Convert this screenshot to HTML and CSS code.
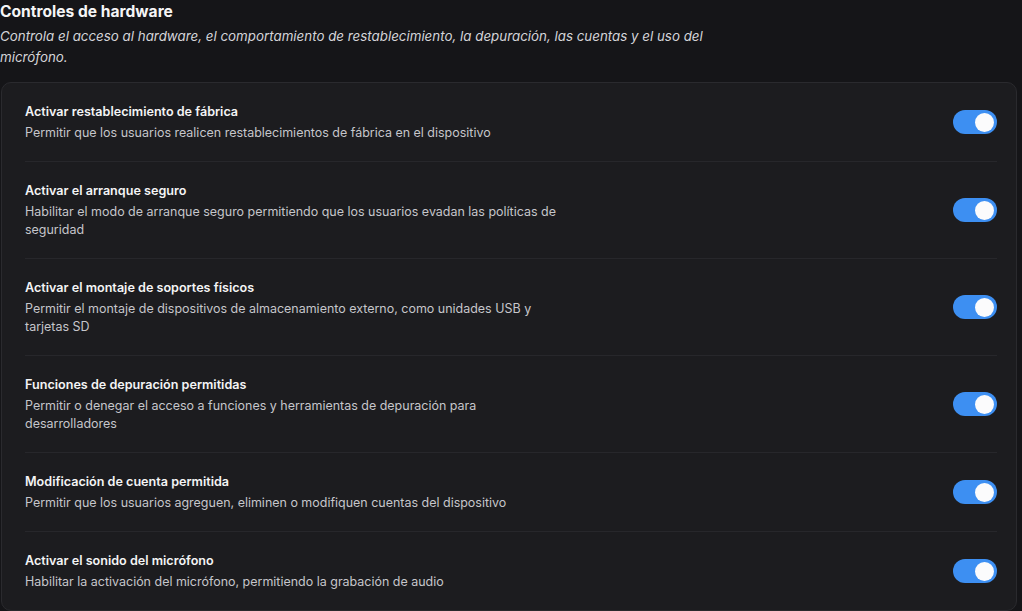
FILE: index.html
```html
<!DOCTYPE html>
<html lang="es">
<head>
<meta charset="utf-8">
<title>Controles de hardware</title>
<link rel="stylesheet" href="styles.css">
</head>
<body>
<main class="page">
  <header class="head">
    <h1 class="title">Controles de hardware</h1>
    <p class="subtitle">Controla el acceso al hardware, el comportamiento de restablecimiento, la depuración, las cuentas y el uso del micrófono.</p>
  </header>
  <section class="card">
    <div class="row">
      <div class="text">
        <div class="label">Activar restablecimiento de fábrica</div>
        <div class="desc">Permitir que los usuarios realicen restablecimientos de fábrica en el dispositivo</div>
      </div>
      <span class="switch"><span class="knob"></span></span>
    </div>
    <div class="row">
      <div class="text">
        <div class="label">Activar el arranque seguro</div>
        <div class="desc">Habilitar el modo de arranque seguro permitiendo que los usuarios evadan las políticas de seguridad</div>
      </div>
      <span class="switch"><span class="knob"></span></span>
    </div>
    <div class="row">
      <div class="text">
        <div class="label">Activar el montaje de soportes físicos</div>
        <div class="desc">Permitir el montaje de dispositivos de almacenamiento externo, como unidades USB y tarjetas SD</div>
      </div>
      <span class="switch"><span class="knob"></span></span>
    </div>
    <div class="row">
      <div class="text">
        <div class="label">Funciones de depuración permitidas</div>
        <div class="desc">Permitir o denegar el acceso a funciones y herramientas de depuración para desarrolladores</div>
      </div>
      <span class="switch"><span class="knob"></span></span>
    </div>
    <div class="row">
      <div class="text">
        <div class="label">Modificación de cuenta permitida</div>
        <div class="desc">Permitir que los usuarios agreguen, eliminen o modifiquen cuentas del dispositivo</div>
      </div>
      <span class="switch"><span class="knob"></span></span>
    </div>
    <div class="row">
      <div class="text">
        <div class="label">Activar el sonido del micrófono</div>
        <div class="desc">Habilitar la activación del micrófono, permitiendo la grabación de audio</div>
      </div>
      <span class="switch"><span class="knob"></span></span>
    </div>
  </section>
</main>
</body>
</html>
```
FILE: styles.css
```css
* { box-sizing: border-box; }
html, body {
  margin: 0;
  padding: 0;
  background: #151518;
  height: 100%;
  overflow: hidden;
}
body {
  font-family: Inter, "Noto Sans", "Liberation Sans", sans-serif;
  color: #f2f2f3;
}
.page {
  width: 1022px;
}
.title {
  margin: 0;
  font-size: 15.6px;
  font-weight: 700;
  line-height: 23px;
  color: #f5f5f6;
}
.subtitle {
  margin: 3px 0 0;
  max-width: 740px;
  font-size: 13.35px;
  font-style: italic;
  line-height: 21px;
  color: #d4d4d8;
}
.card {
  margin: 14px 0 0 1px;
  width: 1016px;
  background: #1c1c1f;
  border: 1px solid #2a2a2e;
  border-radius: 10px;
  padding: 0 19px 0 23px;
}
.row {
  display: flex;
  align-items: center;
  justify-content: space-between;
  padding: 19px 0;
  border-bottom: 1px solid #27272b;
}
.row:last-child {
  border-bottom: none;
}
.text {
  max-width: 540px;
}
.label {
  font-size: 12.6px;
  font-weight: 600;
  line-height: 20px;
  color: #f4f4f5;
}
.desc {
  margin-top: 2px;
  font-size: 12.48px;
  line-height: 18px;
  color: #c6c6cb;
}
.switch {
  flex: none;
  width: 44px;
  height: 24px;
  border-radius: 12px;
  background: #3d8ff2;
  display: flex;
  align-items: center;
  justify-content: flex-end;
  padding: 0 3px;
}
.knob {
  width: 19px;
  height: 19px;
  border-radius: 50%;
  background: #fbfbfc;
}
```
